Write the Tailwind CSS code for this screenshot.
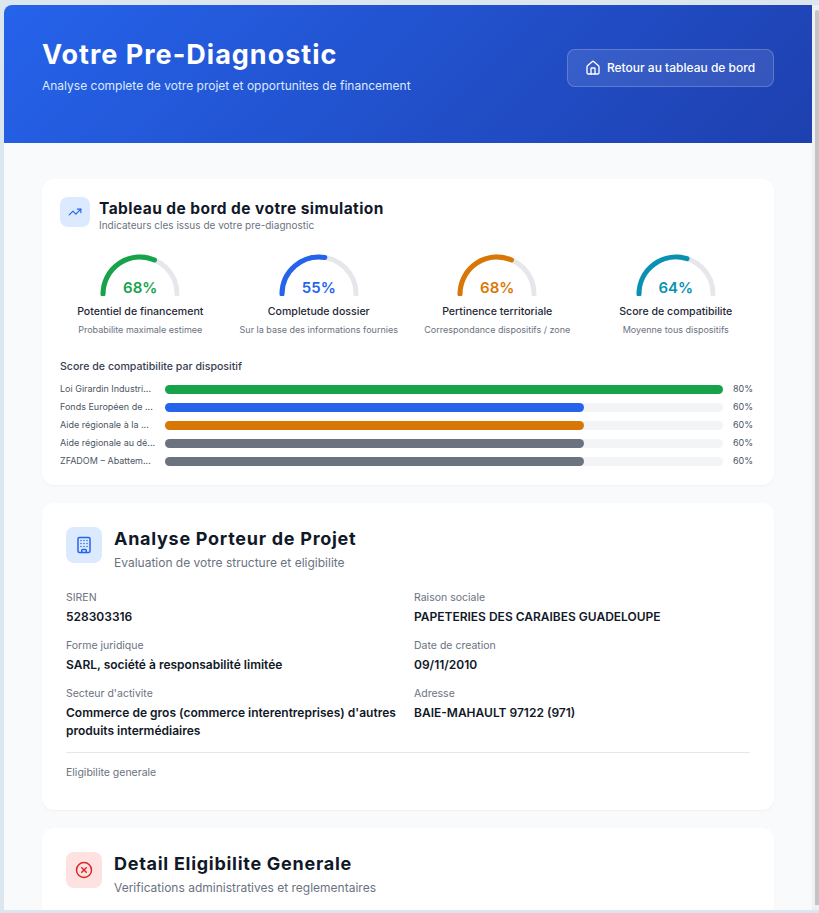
<!DOCTYPE html>
<html lang="fr">
<head>
<meta charset="utf-8">
<script src="https://cdn.jsdelivr.net/npm/@tailwindcss/browser@4"></script>
</head>
<body class="h-[913px] overflow-hidden bg-[#dce6ee] font-['Inter','Liberation_Sans',sans-serif]">
<div class="flex h-[910px] pt-[5px] pl-1">
  <main class="w-[808px] h-[905px] overflow-hidden rounded-tl-lg bg-[#f8fafc]">
    <header class="h-[138px] bg-linear-135 from-[#2563eb] to-[#1e40af] px-[38px] pt-[32px] flex justify-between items-start">
      <div>
        <h1 class="text-[27px] leading-[36px] font-bold text-white tracking-[1px]">Votre Pre-Diagnostic</h1>
        <p class="text-xs leading-[18px] mt-1 text-[#dbeafe]">Analyse complete de votre projet et opportunites de financement</p>
      </div>
      <a class="mt-[12px] flex items-center gap-1.5 h-[38px] w-[207px] justify-center pr-px rounded-lg border border-white/20 bg-white/10 text-xs font-medium text-white">
        <svg class="w-4 h-4" viewBox="0 0 24 24" fill="none" stroke="currentColor" stroke-width="2" stroke-linecap="round" stroke-linejoin="round"><path d="M15 21v-8a1 1 0 0 0-1-1h-4a1 1 0 0 0-1 1v8"/><path d="M3 10a2 2 0 0 1 .709-1.528l7-5.999a2 2 0 0 1 2.582 0l7 5.999A2 2 0 0 1 21 10v9a2 2 0 0 1-2 2H5a2 2 0 0 1-2-2z"/></svg>
        Retour au tableau de bord
      </a>
    </header>
    <div class="px-[38px] pt-9 flex flex-col gap-[18px]">
      <section class="h-[306px] rounded-xl bg-white shadow-[0_1px_2px_rgba(0,0,0,0.04)] px-[18px] pt-[18px]">
        <div class="flex items-start gap-[9px]">
          <div class="w-[30px] h-[30px] rounded-lg bg-[#dbeafe] flex items-center justify-center text-[#2563eb]">
            <svg class="w-3.5 h-3.5" viewBox="0 0 24 24" fill="none" stroke="currentColor" stroke-width="2" stroke-linecap="round" stroke-linejoin="round"><path d="M16 7h6v6"/><path d="m22 7-8.5 8.5-5-5L2 17"/></svg>
          </div>
          <div class="pt-[3px]">
            <h2 class="text-[15.5px] leading-[18px] font-bold text-[#111827] tracking-[0.43px]">Tableau de bord de votre simulation</h2>
            <p class="text-[10px] leading-[14px] text-[#6b7280]">Indicateurs cles issus de votre pre-diagnostic</p>
          </div>
        </div>
        <div class="grid grid-cols-4 gap-[18px] mt-[20px]">
          <div class="flex flex-col items-center">
            <div class="relative w-20 h-[44px]">
              <svg class="w-20 h-[44px]" viewBox="0 0 80 44" fill="none" stroke-width="5" stroke-linecap="round"><path d="M3 42 A37 37 0 0 1 77 42" stroke="#e5e7eb"/><path d="M3 42 A37 37 0 0 1 54.5 8" stroke="#16a34a"/></svg>
              <span class="absolute left-0 right-0 bottom-[-2px] text-center text-[15px] leading-5 font-semibold text-[#16a34a]">68%</span>
            </div>
            <p class="mt-[9px] text-[10.6px] leading-[14px] font-medium text-[#1f2937]">Potentiel de financement</p>
            <p class="mt-[4px] text-[9px] leading-[13px] text-[#6b7280]">Probabilite maximale estimee</p>
          </div>
          <div class="flex flex-col items-center">
            <div class="relative w-20 h-[44px]">
              <svg class="w-20 h-[44px]" viewBox="0 0 80 44" fill="none" stroke-width="5" stroke-linecap="round"><path d="M3 42 A37 37 0 0 1 77 42" stroke="#e5e7eb"/><path d="M3 42 A37 37 0 0 1 45.8 5.5" stroke="#2563eb"/></svg>
              <span class="absolute left-0 right-0 bottom-[-2px] text-center text-[15px] leading-5 font-semibold text-[#2563eb]">55%</span>
            </div>
            <p class="mt-[9px] text-[10.6px] leading-[14px] font-medium text-[#1f2937]">Completude dossier</p>
            <p class="mt-[4px] text-[9px] leading-[13px] text-[#6b7280]">Sur la base des informations fournies</p>
          </div>
          <div class="flex flex-col items-center">
            <div class="relative w-20 h-[44px]">
              <svg class="w-20 h-[44px]" viewBox="0 0 80 44" fill="none" stroke-width="5" stroke-linecap="round"><path d="M3 42 A37 37 0 0 1 77 42" stroke="#e5e7eb"/><path d="M3 42 A37 37 0 0 1 54.5 8" stroke="#d97706"/></svg>
              <span class="absolute left-0 right-0 bottom-[-2px] text-center text-[15px] leading-5 font-semibold text-[#d97706]">68%</span>
            </div>
            <p class="mt-[9px] text-[10.6px] leading-[14px] font-medium text-[#1f2937]">Pertinence territoriale</p>
            <p class="mt-[4px] text-[9px] leading-[13px] text-[#6b7280]">Correspondance dispositifs / zone</p>
          </div>
          <div class="flex flex-col items-center">
            <div class="relative w-20 h-[44px]">
              <svg class="w-20 h-[44px]" viewBox="0 0 80 44" fill="none" stroke-width="5" stroke-linecap="round"><path d="M3 42 A37 37 0 0 1 77 42" stroke="#e5e7eb"/><path d="M3 42 A37 37 0 0 1 51 6.7" stroke="#0891b2"/></svg>
              <span class="absolute left-0 right-0 bottom-[-2px] text-center text-[15px] leading-5 font-semibold text-[#0891b2]">64%</span>
            </div>
            <p class="mt-[9px] text-[10.6px] leading-[14px] font-medium text-[#1f2937]">Score de compatibilite</p>
            <p class="mt-[4px] text-[9px] leading-[13px] text-[#6b7280]">Moyenne tous dispositifs</p>
          </div>
        </div>
        <h3 class="mt-[24px] text-[10.6px] leading-[14px] font-medium text-[#374151]">Score de compatibilite par dispositif</h3>
        <div class="mt-[10px] pr-[3px] flex flex-col gap-2">
          <div class="flex items-center h-[10px] text-[9px] text-[#4b5563]"><span class="w-[105px] whitespace-nowrap">Loi Girardin Industri...</span><span class="flex-1 h-[9px] rounded-full bg-[#f3f4f6]"><span class="block h-full w-full rounded-full bg-[#16a34a]"></span></span><span class="w-[30px] text-right">80%</span></div>
          <div class="flex items-center h-[10px] text-[9px] text-[#4b5563]"><span class="w-[105px] whitespace-nowrap">Fonds Européen de ...</span><span class="flex-1 h-[9px] rounded-full bg-[#f3f4f6]"><span class="block h-full w-3/4 rounded-full bg-[#2563eb]"></span></span><span class="w-[30px] text-right">60%</span></div>
          <div class="flex items-center h-[10px] text-[9px] text-[#4b5563]"><span class="w-[105px] whitespace-nowrap">Aide régionale à la ...</span><span class="flex-1 h-[9px] rounded-full bg-[#f3f4f6]"><span class="block h-full w-3/4 rounded-full bg-[#d97706]"></span></span><span class="w-[30px] text-right">60%</span></div>
          <div class="flex items-center h-[10px] text-[9px] text-[#4b5563]"><span class="w-[105px] whitespace-nowrap">Aide régionale au dé...</span><span class="flex-1 h-[9px] rounded-full bg-[#f3f4f6]"><span class="block h-full w-3/4 rounded-full bg-[#6b7280]"></span></span><span class="w-[30px] text-right">60%</span></div>
          <div class="flex items-center h-[10px] text-[9px] text-[#4b5563]"><span class="w-[105px] whitespace-nowrap">ZFADOM – Abattem...</span><span class="flex-1 h-[9px] rounded-full bg-[#f3f4f6]"><span class="block h-full w-3/4 rounded-full bg-[#6b7280]"></span></span><span class="w-[30px] text-right">60%</span></div>
        </div>
      </section>
      <section class="h-[307px] rounded-xl bg-white shadow-[0_1px_2px_rgba(0,0,0,0.04)] px-6 pt-6">
        <div class="flex items-start gap-3">
          <div class="w-9 h-9 rounded-lg bg-[#dbeafe] flex items-center justify-center text-[#2563eb]">
            <svg class="w-[18px] h-[18px]" viewBox="0 0 24 24" fill="none" stroke="currentColor" stroke-width="2" stroke-linecap="round" stroke-linejoin="round"><path d="M12 10h.01"/><path d="M12 14h.01"/><path d="M12 6h.01"/><path d="M16 10h.01"/><path d="M16 14h.01"/><path d="M16 6h.01"/><path d="M8 10h.01"/><path d="M8 14h.01"/><path d="M8 6h.01"/><path d="M9 22v-3a1 1 0 0 1 1-1h4a1 1 0 0 1 1 1v3"/><rect x="4" y="2" width="16" height="20" rx="2"/></svg>
          </div>
          <div>
            <h2 class="text-lg leading-[24px] font-bold text-[#111827] tracking-[0.72px]">Analyse Porteur de Projet</h2>
            <p class="text-xs leading-[18px] mt-[3px] text-[#6b7280]">Evaluation de votre structure et eligibilite</p>
          </div>
        </div>
        <div class="grid grid-cols-2 gap-x-3 gap-y-[13px] mt-[19px] text-[#111827]">
          <div><p class="text-[10.5px] leading-[14px] text-[#6b7280]">SIREN</p><p class="mt-[3px] text-xs leading-[18px] font-semibold">528303316</p></div>
          <div><p class="text-[10.5px] leading-[14px] text-[#6b7280]">Raison sociale</p><p class="mt-[3px] text-xs leading-[18px] font-semibold">PAPETERIES DES CARAIBES GUADELOUPE</p></div>
          <div><p class="text-[10.5px] leading-[14px] text-[#6b7280]">Forme juridique</p><p class="mt-[3px] text-xs leading-[18px] font-semibold">SARL, société à responsabilité limitée</p></div>
          <div><p class="text-[10.5px] leading-[14px] text-[#6b7280]">Date de creation</p><p class="mt-[3px] text-xs leading-[18px] font-semibold">09/11/2010</p></div>
          <div><p class="text-[10.5px] leading-[14px] text-[#6b7280]">Secteur d'activite</p><p class="mt-[3px] text-xs leading-[18px] font-semibold">Commerce de gros (commerce interentreprises) d'autres produits intermédiaires</p></div>
          <div><p class="text-[10.5px] leading-[14px] text-[#6b7280]">Adresse</p><p class="mt-[3px] text-xs leading-[18px] font-semibold">BAIE-MAHAULT 97122 (971)</p></div>
        </div>
        <div class="mt-3 border-t border-[#e5e7eb] pt-[13px]"><p class="text-[10.5px] leading-[14px] text-[#6b7280]">Eligibilite generale</p></div>
      </section>
      <section class="rounded-xl bg-white shadow-[0_1px_2px_rgba(0,0,0,0.04)] px-6 pt-6 h-[120px]">
        <div class="flex items-start gap-3">
          <div class="w-9 h-9 rounded-lg bg-[#fee2e2] flex items-center justify-center text-[#dc2626]">
            <svg class="w-[18px] h-[18px]" viewBox="0 0 24 24" fill="none" stroke="currentColor" stroke-width="2" stroke-linecap="round" stroke-linejoin="round"><circle cx="12" cy="12" r="10"/><path d="m15 9-6 6"/><path d="m9 9 6 6"/></svg>
          </div>
          <div>
            <h2 class="text-lg leading-[24px] font-bold text-[#111827] tracking-[0.72px]">Detail Eligibilite Generale</h2>
            <p class="text-xs leading-[18px] mt-[3px] text-[#6b7280]">Verifications administratives et reglementaires</p>
          </div>
        </div>
      </section>
    </div>
  </main>
  <div class="w-[7px] h-[905px] bg-[#eef1f4] pl-[3px] pt-[5px]"><div class="h-[895px] rounded-t-sm bg-[#c4c4c4]"></div></div>
</div>
</body>
</html>
